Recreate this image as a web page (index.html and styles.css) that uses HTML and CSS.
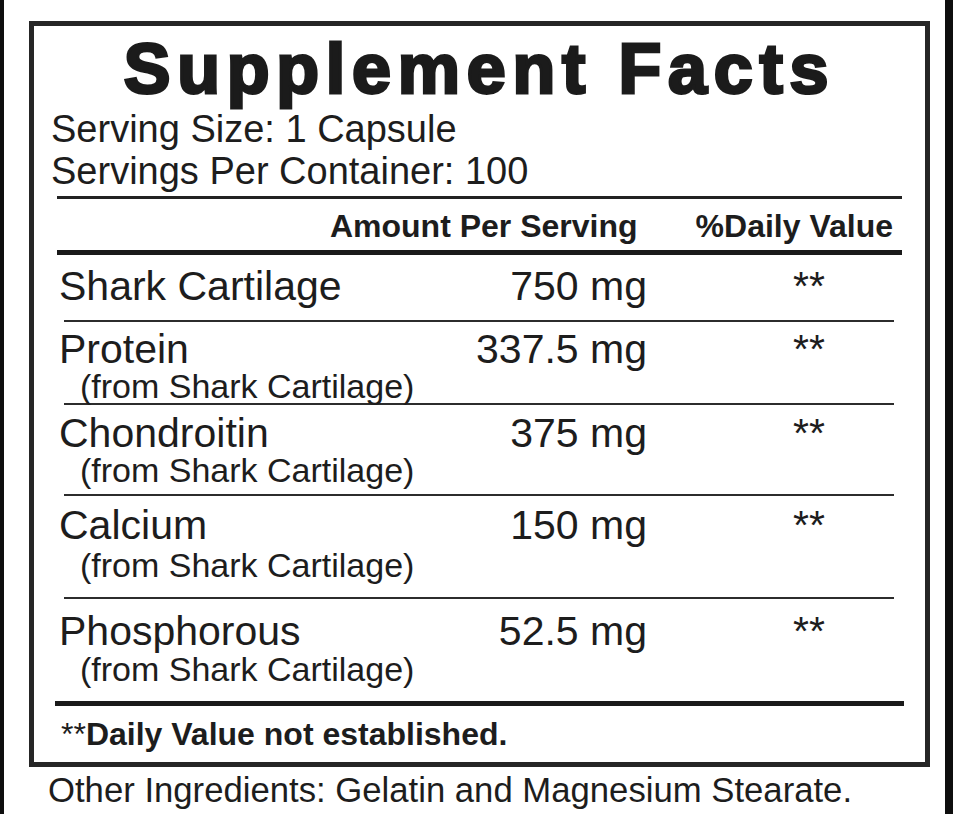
FILE: index.html
```html
<!DOCTYPE html>
<html lang="en">
<head>
<meta charset="utf-8">
<title>Supplement Facts</title>
<link rel="stylesheet" href="styles.css">
</head>
<body>
<div class="page">
  <section class="facts">
    <h1 class="title">Supplement Facts</h1>
    <div class="serving">
      <p>Serving Size: 1 Capsule</p>
      <p>Servings Per Container: 100</p>
    </div>
    <div class="table">
      <div class="head">
        <span></span>
        <span class="head-amt">Amount Per Serving</span>
        <span class="head-dv">%Daily Value</span>
      </div>
      <div class="row r1">
        <div class="name"><div class="main">Shark Cartilage</div></div>
        <div class="amt">750 mg</div>
        <div class="dv">**</div>
      </div>
      <div class="row r2">
        <div class="name"><div class="main">Protein</div><div class="sub">(from Shark Cartilage)</div></div>
        <div class="amt">337.5 mg</div>
        <div class="dv">**</div>
      </div>
      <div class="row r3">
        <div class="name"><div class="main">Chondroitin</div><div class="sub">(from Shark Cartilage)</div></div>
        <div class="amt">375 mg</div>
        <div class="dv">**</div>
      </div>
      <div class="row r4">
        <div class="name"><div class="main">Calcium</div><div class="sub">(from Shark Cartilage)</div></div>
        <div class="amt">150 mg</div>
        <div class="dv">**</div>
      </div>
      <div class="row r5">
        <div class="name"><div class="main">Phosphorous</div><div class="sub">(from Shark Cartilage)</div></div>
        <div class="amt">52.5 mg</div>
        <div class="dv">**</div>
      </div>
    </div>
    <p class="note"><span class="stars">**</span>Daily Value not established.</p>
  </section>
  <p class="other">Other Ingredients: Gelatin and Magnesium Stearate.</p>
</div>
</body>
</html>
```

FILE: styles.css
```css
html, body {
  margin: 0;
  padding: 0;
}
body {
  background: #0e0e0e;
  font-family: "Liberation Sans", Arial, sans-serif;
  color: #1d1d1d;
}
.page {
  margin: 0 8px 0 4px;
  height: 814px;
  box-sizing: border-box;
  padding-top: 21px;
  background: #fff;
  overflow: hidden;
}
.facts {
  margin-left: 25px;
  width: 901px;
  box-sizing: border-box;
  border: 5px solid #262626;
  padding-top: 8px;
}
.title {
  margin: 0;
  font-family: "Liberation Sans", Arial, sans-serif;
  font-weight: 700;
  font-size: 70px;
  line-height: 70px;
  letter-spacing: 6.8px;
  -webkit-text-stroke: 3px #1b1b1b;
  text-align: center;
  color: #1b1b1b;
}
.serving {
  margin: 4px 0 0 17px;
  font-size: 38px;
  line-height: 42px;
}
.serving p {
  margin: 0;
}
.table {
  margin: 4px 23px 0;
  border-top: 3px solid #222;
}
.head {
  display: grid;
  grid-template-columns: 1fr auto auto;
  column-gap: 54px;
  height: 56px;
  box-sizing: border-box;
  padding: 3px 9px 0 0;
  border-bottom: 5px solid #1a1a1a;
  font-weight: 700;
  font-size: 32px;
  line-height: 48px;
}
.head-amt {
  margin-right: 4px;
}
.row {
  display: grid;
  grid-template-columns: 1fr auto 247px;
  align-items: start;
  margin: 0 8px 0 7px;
  box-sizing: border-box;
  border-bottom: 2px solid #2c2c2c;
}
.r1 { height: 67px; padding-top: 7px; }
.r2 { height: 83px; padding-top: 3px; }
.r3 { height: 91px; padding-top: 4px; }
.r4 { height: 103px; padding-top: 5px; }
.r5 { height: 102px; padding-top: 8px; border-bottom: 0; }
.main {
  margin-left: -5px;
  font-size: 41px;
  line-height: 48px;
  white-space: nowrap;
}
.sub {
  margin-left: 16px;
  font-size: 34px;
  line-height: 26px;
  white-space: nowrap;
}
.r4 .sub { margin-top: 3px; }
.r5 .sub { margin-top: 1px; }
.amt {
  font-size: 41px;
  line-height: 48px;
  text-align: right;
  white-space: nowrap;
}
.dv {
  padding-left: 146px;
  font-size: 41px;
  line-height: 48px;
}
.note {
  margin: 0 21px;
  padding-left: 6px;
  border-top: 5px solid #1a1a1a;
  font-weight: 700;
  font-size: 32px;
  line-height: 56px;
}
.stars {
  font-weight: 400;
  font-size: 32px;
}
.other {
  margin: 1px 0 0 44px;
  font-size: 34.7px;
  line-height: 44px;
}
```
